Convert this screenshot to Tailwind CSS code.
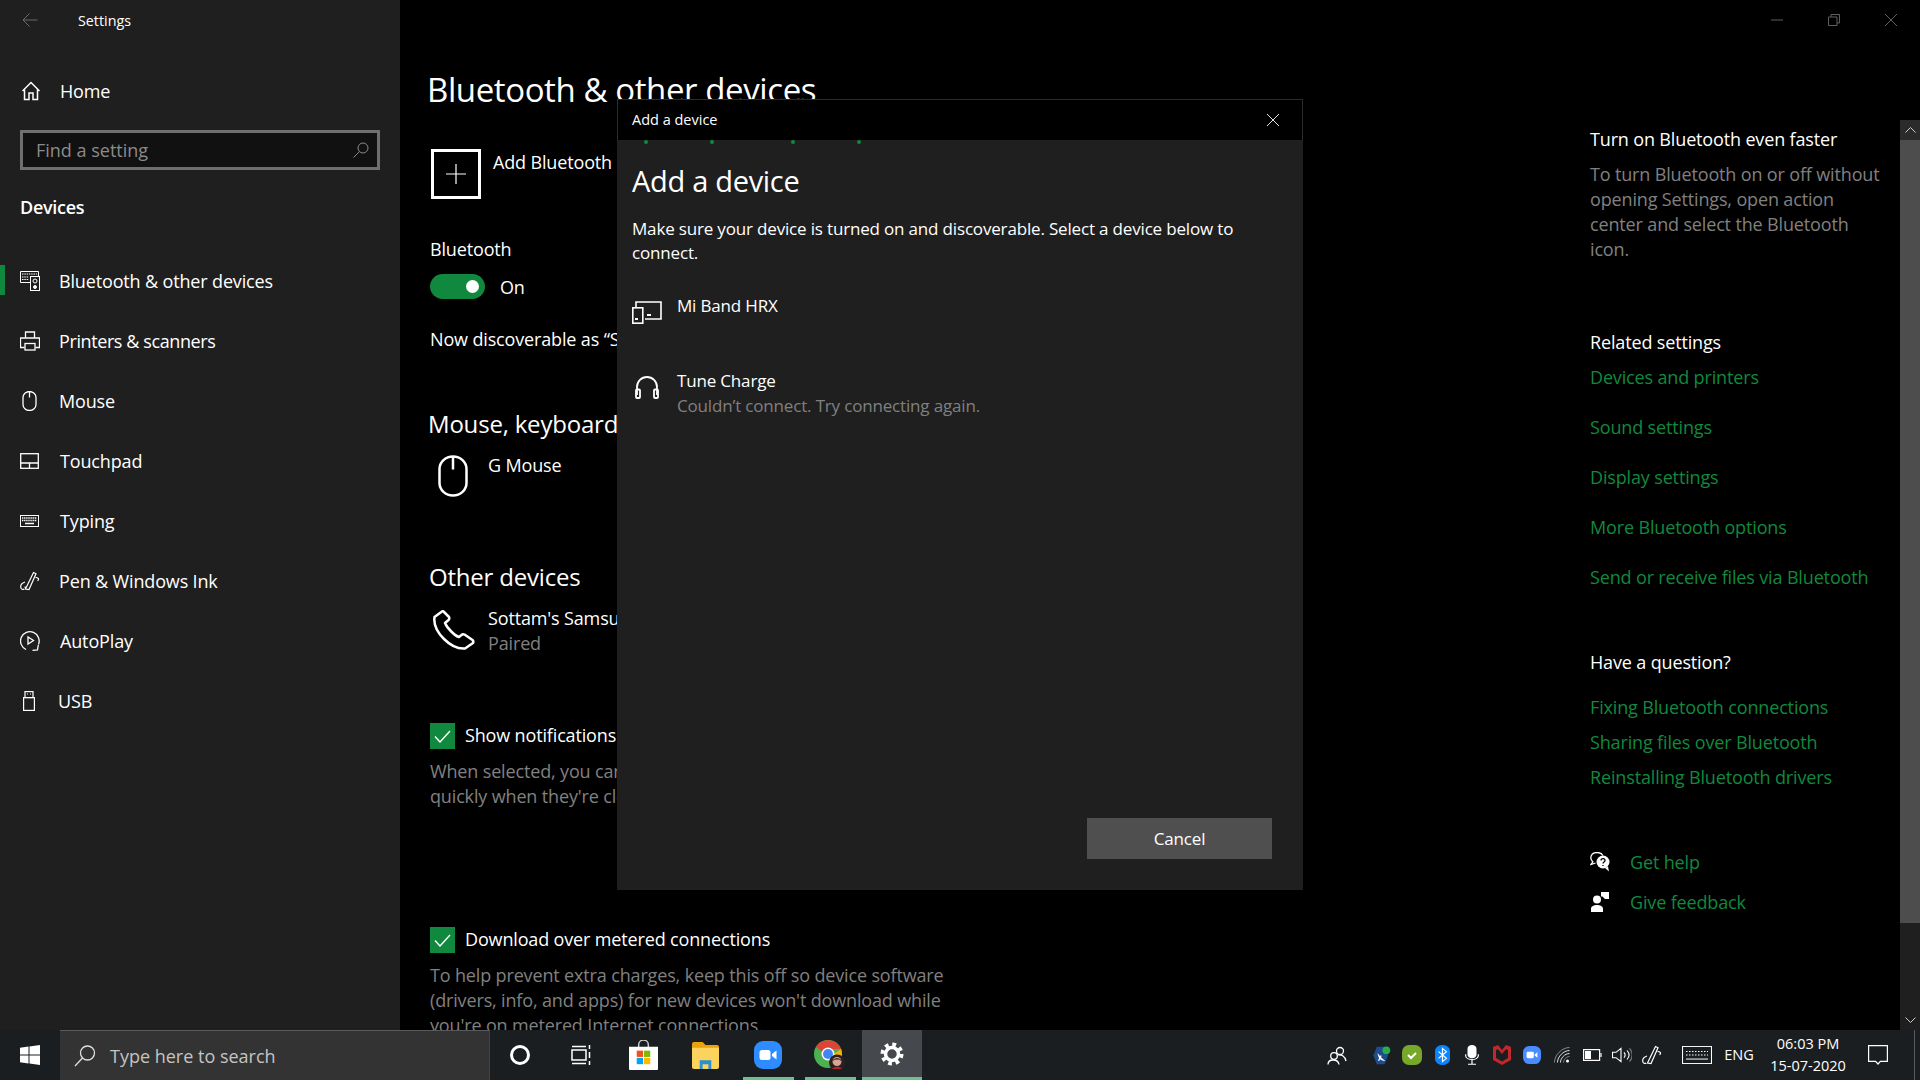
<!DOCTYPE html>
<html lang="en">

<head>
    <meta charset="UTF-8">
    <title>Settings</title>
    <script src="https://cdn.jsdelivr.net/npm/@tailwindcss/browser@4"></script>
</head>

<body class="bg-black text-white overflow-hidden font-['Open_Sans','Noto_Sans',sans-serif] text-[18px] leading-6 tracking-[-0.15px]">
    <div class="w-[1920px] h-[1080px] flex flex-col">
        <!-- Window -->
        <div class="relative h-[1030px] flex overflow-hidden">
            <!-- Sidebar -->
            <aside class="w-[400px] shrink-0 bg-[#1f1f1f]">
                <div class="h-10 flex items-center pl-[22px]">
                    <svg class="w-4 h-4" viewBox="0 0 16 16" fill="none" stroke="#6a6a6a" stroke-width="1"><path d="M15.500 8H1M7.500 1.500 1 8l6.500 6.500" /></svg>
                    <span class="ml-10 mt-[2px] text-[14.300px] tracking-normal">Settings</span>
                </div>
                <div class="mt-[21px] h-[60px] flex items-center pl-[22px]">
                    <svg class="w-[18px] h-[20px]" viewBox="0 0 18 20" fill="none" stroke="white" stroke-width="1.500"><path d="M.5 10 9 1.500l8.500 8.500M2.500 8.500V18.500h4.500v-6.500h4v6.500h4.500V8.500" /></svg>
                    <span class="ml-[20px]">Home</span>
                </div>
                <div class="mt-[9px] mx-5 h-10 border-[3px] border-[#6f6f6f] bg-[#111111] flex items-center justify-between pl-[13px] pr-[8px] text-[#8b8b8b] tracking-normal">
                    <span>Find a setting</span>
                    <svg class="w-4 h-4" viewBox="0 0 16 16" fill="none" stroke="#8b8b8b" stroke-width="1"><circle cx="10" cy="6" r="5" /><path d="M6.500 9.500.5 15.500" /></svg>
                </div>
                <div class="mt-[25px] ml-5 font-semibold tracking-[-0.3px]">Devices</div>
                <nav class="mt-8">
                    <div class="relative h-[60px] flex items-center pl-5">
                        <div class="absolute left-0 top-[14px] w-[5px] h-[30px] bg-[#10893e]"></div>
                        <svg class="w-5 h-5" viewBox="0 0 20 20" fill="none" stroke="white" stroke-width="1"><path d="M11 11.500H.5V.5h18V5" /><path d="M2 3h15M2 6h7M2 8.500h7" stroke-dasharray="1.500 .8" /><rect x="10.500" y="5.500" width="9" height="14" /><circle cx="15" cy="10" r="2" /><circle cx="15" cy="16" r="1.500" fill="white" /></svg>
                        <span class="ml-[19px]">Bluetooth &amp; other devices</span>
                    </div>
                    <div class="h-[60px] flex items-center pl-5">
                        <svg class="w-5 h-5" viewBox="0 0 20 20" fill="none" stroke="white" stroke-width="1.300"><path d="M5.500 7V1h9v6M4.500 16.500H.5V7h19v9.500h-4" /><rect x="5" y="12.500" width="10" height="6.500" /></svg>
                        <span class="ml-[19px] tracking-[-0.4px]">Printers &amp; scanners</span>
                    </div>
                    <div class="h-[60px] flex items-center pl-[22px]">
                        <svg class="w-[15px] h-5" viewBox="0 0 15 20" fill="none" stroke="white" stroke-width="1.300"><path d="M1 6.500a6.500 6 0 0 1 13 0v7a6.500 6 0 0 1-13 0zM7.500 .5v6" /></svg>
                        <span class="ml-[22px]">Mouse</span>
                    </div>
                    <div class="h-[60px] flex items-center pl-5">
                        <svg class="w-[19px] h-4" viewBox="0 0 19 16" fill="none" stroke="white" stroke-width="1.300"><rect x=".7" y=".7" width="17.600" height="14.600" /><path d="M.7 10h17.600M9.500 10v5" /></svg>
                        <span class="ml-[21px]">Touchpad</span>
                    </div>
                    <div class="h-[60px] flex items-center pl-5">
                        <svg class="w-[19px] h-3" viewBox="0 0 19 12" fill="none" stroke="white" stroke-width="1"><rect x=".5" y=".5" width="18" height="11" /><path d="M2 3h15M2 5.500h15" stroke-width="1.600" stroke-dasharray="1.400 .7" /><path d="M5 8.500h9" stroke-width="1.500" /></svg>
                        <span class="ml-[21px]">Typing</span>
                    </div>
                    <div class="h-[60px] flex items-center pl-5">
                        <svg class="w-5 h-5" viewBox="0 0 20 20" fill="none" stroke="white" stroke-width="1.200"><path d="m5.500 18 8-16.500 2.500 1.200L9 18.500ZM5.500 18l-.5-2.500M15.500 6.500c3 0 4 1.800 2 3.200M5 11C2 12 .5 14 .7 16c.2 2.500 2.300 3 3.500 2" /></svg>
                        <span class="ml-[19px]">Pen &amp; Windows Ink</span>
                    </div>
                    <div class="h-[60px] flex items-center pl-5">
                        <svg class="w-5 h-5" viewBox="0 0 20 20" fill="none" stroke="white" stroke-width="1.300"><path d="M6 18.500A9.300 9.300 0 1 1 18.500 13.500" /><path d="M8 6v7l5.500-3.500zM12.500 19.300l5-.3.800-5" /></svg>
                        <span class="ml-5">AutoPlay</span>
                    </div>
                    <div class="h-[60px] flex items-center pl-[23px]">
                        <svg class="w-3 h-5" viewBox="0 0 12 20" fill="none" stroke="white" stroke-width="1.200"><rect x="2" y=".6" width="8" height="6" /><rect x=".6" y="6.600" width="10.800" height="12.800" /><path d="M4 3h1M7 3h1" /></svg>
                        <span class="ml-[23px]">USB</span>
                    </div>
                </nav>
            </aside>

            <!-- Main content -->
            <main class="w-[1190px] shrink-0 pl-[30px] pt-[67px]">
                <h1 class="h-[46px] -ml-[3px] text-[33px] leading-[46px] tracking-[-0.4px]">Bluetooth &amp; other devices</h1>
                <div class="mt-[36px] h-[50px] flex items-start pl-px">
                    <div class="w-[50px] h-[50px] border-[3px] border-white flex items-center justify-center">
                        <svg class="w-5 h-5" viewBox="0 0 20 20" stroke="white" stroke-width="1.200"><path d="M10 0v20M0 10h20" /></svg>
                    </div>
                    <span class="ml-3 mt-px">Add Bluetooth or other device</span>
                </div>
                <div class="mt-[38px]">Bluetooth</div>
                <div class="mt-[13px] h-[25px] flex items-center">
                    <div class="w-[55px] h-[25px] rounded-full bg-[#10893e] flex items-center justify-end pr-[6px]">
                        <div class="w-[13px] h-[13px] rounded-full bg-white"></div>
                    </div>
                    <span class="ml-[15px]">On</span>
                </div>
                <div class="mt-7">Now discoverable as “Sottam-PC”</div>
                <h2 class="mt-[57px] -ml-[2px] h-8 text-[24px] leading-8 tracking-[-0.2px]">Mouse, keyboard, &amp; pen</h2>
                <div class="mt-[13px] h-[46px] flex items-start">
                    <svg class="mt-[2px] ml-2 w-[30px] h-[42px]" viewBox="0 0 30 42" fill="none" stroke="white" stroke-width="2.500"><path d="M1.500 14a13.500 12.500 0 0 1 27 0v14a13.500 12.500 0 0 1-27 0zM15 1.500v13" /></svg>
                    <span class="ml-[20px]">G Mouse</span>
                </div>
                <h2 class="mt-[62px] -ml-px h-8 text-[24px] leading-8 tracking-[-0.2px]">Other devices</h2>
                <div class="mt-[13px] h-[49px] flex items-start">
                    <svg class="mt-[4px] ml-[3px] w-[42px] h-[40px]" viewBox="0 0 42 40" fill="none" stroke="white" stroke-width="2.500" stroke-linejoin="round"><path d="M9 1.500 1.500 7C.5 14 4 22 11 29c7 7 15 10 21 9.500l8-5.500c.5-1 .5-2-.5-3l-8-5.500c-1-.5-2-.5-3 .5L26 27c-4-1-12-9-14-14l3.500-3c1-1 1-2 .5-3L11 2c-.5-1-1.500-1-2-.5z" /></svg>
                    <div class="ml-[13px]">
                        <div class="h-[25px]">Sottam's Samsung</div>
                        <div class="h-6 text-[#808080]">Paired</div>
                    </div>
                </div>
                <div class="mt-[68px] h-[26px] flex items-center">
                    <div class="w-[25px] h-[26px] bg-[#10893e] flex items-center justify-center">
                        <svg class="w-[17px] h-[13px]" viewBox="0 0 17 13" fill="none" stroke="white" stroke-width="1.400"><path d="m1 6.500 5 5.500L16 1" /></svg>
                    </div>
                    <span class="ml-[10px] -mt-[2px]">Show notifications to connect using Swift Pair</span>
                </div>
                <p class="mt-[10px] w-[530px] leading-[25px] text-[#808080]">When selected, you can connect to supported Bluetooth devices quickly when they're close by and in pairing mode.</p>
                <div class="mt-[118px] h-[26px] flex items-center">
                    <div class="w-[25px] h-[26px] bg-[#10893e] flex items-center justify-center">
                        <svg class="w-[17px] h-[13px]" viewBox="0 0 17 13" fill="none" stroke="white" stroke-width="1.400"><path d="m1 6.500 5 5.500L16 1" /></svg>
                    </div>
                    <span class="ml-[10px] -mt-[2px]">Download over metered connections</span>
                </div>
                <p class="mt-[10px] w-[530px] leading-[25px] text-[#808080]">To help prevent extra charges, keep this off so device software (drivers, info, and apps) for new devices won't download while you're on metered Internet connections.</p>
            </main>

            <!-- Related links column -->
            <section class="w-[310px] shrink-0 pt-[127px]">
                <div>Turn on Bluetooth even faster</div>
                <p class="mt-[11px] w-[295px] leading-[25px] text-[#808080]">To turn Bluetooth on or off without opening Settings, open action center and select the Bluetooth icon.</p>
                <div class="mt-[68px]">Related settings</div>
                <div class="mt-[11px] flex flex-col gap-[26px] text-[#10893e]">
                    <span>Devices and printers</span>
                    <span>Sound settings</span>
                    <span>Display settings</span>
                    <span>More Bluetooth options</span>
                    <span>Send or receive files via Bluetooth</span>
                </div>
                <div class="mt-[61px]">Have a question?</div>
                <div class="mt-[21px] flex flex-col gap-[11px] text-[#10893e]">
                    <span>Fixing Bluetooth connections</span>
                    <span>Sharing files over Bluetooth</span>
                    <span>Reinstalling Bluetooth drivers</span>
                </div>
                <div class="mt-[61px] flex items-center text-[#10893e]">
                    <svg class="w-5 h-5" viewBox="0 0 20 20"><path d="M7 .5C3 .5.8 3 .8 5.800c0 1.700.8 3 2 4L1 12.500l4.500-1.500" fill="none" stroke="white" stroke-width="1.300" /><path d="M7 .5c3 0 5 1.200 5.800 3" fill="none" stroke="white" stroke-width="1.300" /><circle cx="13" cy="10" r="6.500" fill="white" /><path d="m15 16 4 3.500-1-5z" fill="white" /><path d="M11 8.500c0-2.500 4-2.500 4 0 0 1.500-2 1.500-2 3M13 13v1" fill="none" stroke="black" stroke-width="1.300" /></svg>
                    <span class="ml-5">Get help</span>
                </div>
                <div class="mt-4 flex items-center text-[#10893e]">
                    <svg class="w-5 h-5" viewBox="0 0 20 20" fill="white"><circle cx="7" cy="7.500" r="4" /><path d="M1 20v-3c0-3 3-4 6-4s6 1 6 4v3zM11 0h8v7h-4l-2.500-2.500H11z" /></svg>
                    <span class="ml-5">Give feedback</span>
                </div>
            </section>

            <!-- Scrollbar -->
            <div class="w-5 shrink-0 flex flex-col pt-[120px]">
                <div class="h-5 bg-[#2b2b2b] flex items-center justify-center">
                    <svg class="w-[11px] h-[6px]" viewBox="0 0 11 6" fill="none" stroke="#cfcfcf" stroke-width="1"><path d="m.5 5.500 5-5 5 5" /></svg>
                </div>
                <div class="h-[783px] bg-[#4d4d4d]"></div>
                <div class="flex-1 bg-[#1f1f1f] flex items-end justify-center pb-[7px]">
                    <svg class="w-[11px] h-[6px]" viewBox="0 0 11 6" fill="none" stroke="#cfcfcf" stroke-width="1"><path d="m.5.5 5 5 5-5" /></svg>
                </div>
            </div>

            <!-- Window controls -->
            <div class="absolute top-0 right-0 h-10 flex items-center">
                <svg class="absolute right-[137px] w-3 h-[2px]" viewBox="0 0 12 2" stroke="#5f5f5f"><path d="M0 1h12" /></svg>
                <svg class="absolute right-[80px] w-3 h-3" viewBox="0 0 12 12" fill="none" stroke="#5f5f5f"><path d="M.5 3h8.500v8.500H.5zM3 3V.5h8.500V9H9" /></svg>
                <svg class="absolute right-[23px] w-3 h-3" viewBox="0 0 12 12" stroke="#5f5f5f"><path d="m0 0 12 12M12 0 0 12" /></svg>
            </div>

            <!-- Add a device dialog -->
            <div class="absolute left-[617px] top-[99px] w-[686px] h-[791px] bg-[#1f1f1f] flex flex-col text-[17px] tracking-[-0.17px]">
                <div class="h-[41px] shrink-0 bg-black border border-[#2b2b2b] border-b-0 flex items-center justify-between pl-[14px] pr-[23px]">
                    <span class="text-[14.500px] tracking-normal">Add a device</span>
                    <svg class="w-3 h-3" viewBox="0 0 12 12" stroke="#e0e0e0"><path d="m0 0 12 12M12 0 0 12" /></svg>
                </div>
                <div class="h-1 pl-[27px] flex">
                    <div class="w-1 h-1 rounded-full bg-[#10893e]"></div>
                    <div class="ml-[62px] w-1 h-1 rounded-full bg-[#10893e]"></div>
                    <div class="ml-[77px] w-1 h-1 rounded-full bg-[#10893e]"></div>
                    <div class="ml-[62px] w-1 h-1 rounded-full bg-[#10893e]"></div>
                </div>
                <h2 class="mt-[17px] ml-[15px] h-10 text-[29px] leading-10 tracking-[-0.3px]">Add a device</h2>
                <p class="mt-[16px] mx-[15px] w-[620px]">Make sure your device is turned on and discoverable. Select a device below to connect.</p>
                <div class="mt-[29px] ml-[15px] h-[75px] flex items-start">
                    <svg class="mt-[7px] w-[30px] h-[23px]" viewBox="0 0 30 23" fill="none" stroke="white" stroke-width="1.600"><path d="M4 6V1h25v17H13" /><rect x=".8" y="6.800" width="10" height="15.400" /><path d="M3 18h3M15 14h4" stroke-width="2" /></svg>
                    <span class="ml-[15px]">Mi Band HRX</span>
                </div>
                <div class="ml-[15px] flex items-start">
                    <svg class="mt-[6px] ml-[3px] w-6 h-6" viewBox="0 0 24 24" fill="none" stroke="white" stroke-width="1.800"><path d="M2 20V12a10 10 0 0 1 20 0v8" /><rect x="1" y="14.500" width="4" height="8.500" rx="1" /><rect x="19" y="14.500" width="4" height="8.500" rx="1" /></svg>
                    <div class="ml-[18px]">
                        <div class="h-[25px]">Tune Charge</div>
                        <div class="text-[#808080]">Couldn’t connect. Try connecting again.</div>
                    </div>
                </div>
                <button class="mt-auto mb-[31px] mr-[31px] self-end w-[185px] h-[41px] bg-[#4f4f4f]">Cancel</button>
            </div>
        </div>

        <!-- Taskbar -->
        <footer class="h-[50px] flex bg-[#1b1e21] text-white">
            <div class="w-[60px] flex items-center justify-center">
                <svg class="w-5 h-5" viewBox="0 0 20 20" fill="white"><path d="M0 2.800 8.500 1.600v7.800H0zM9.500 1.400 20 0v9.400H9.500zM0 10.500h8.500v7.900L0 17.200zM9.500 10.500H20V20L9.500 18.600z" /></svg>
            </div>
            <div class="w-[430px] bg-[#333333] border-t border-[#5a5a5a] border-r-[1px] border-r-[#444444] flex items-center pl-[14px] text-[#c4c4c4] tracking-normal">
                <svg class="w-[22px] h-[22px] shrink-0" viewBox="0 0 22 22" fill="none" stroke="#e0e0e0" stroke-width="1.300"><circle cx="13.500" cy="8" r="7" /><path d="M8.500 13 1 21" /></svg>
                <span class="ml-[14px]">Type here to search</span>
            </div>
            <div class="w-[60px] flex items-center justify-center">
                <div class="w-5 h-5 rounded-full border-[3px] border-white"></div>
            </div>
            <div class="w-[62px] flex items-center justify-center">
                <svg class="w-5 h-[20px]" viewBox="0 0 20 20" fill="none" stroke="white" stroke-width="1.500"><rect x="1" y="5" width="14" height="10" /><path d="M1 1.500h14M1 18.500h14M18.500 0v4M18.500 7v6M18.500 16v4" /></svg>
            </div>
            <div class="w-[62px] flex items-center justify-center">
                <svg class="w-[29px] h-[30px]" viewBox="0 0 30 31"><path d="M10 8V5a5 5 0 0 1 10 0v3" fill="none" stroke="#d0d0d0" stroke-width="1.500" /><path d="M0 7h30v23a1 1 0 0 1-1 1H1a1 1 0 0 1-1-1z" fill="white" /><rect x="8" y="11" width="6.500" height="6.500" fill="#f25022" /><rect x="15.500" y="11" width="6.500" height="6.500" fill="#7fba00" /><rect x="8" y="18.500" width="6.500" height="6.500" fill="#00a4ef" /><rect x="15.500" y="18.500" width="6.500" height="6.500" fill="#ffb900" /></svg>
            </div>
            <div class="w-[63px] flex items-center justify-center">
                <svg class="w-[27px] h-[27px]" viewBox="0 0 28 28"><path d="M0 2a2 2 0 0 1 2-2h9l3 3h12a2 2 0 0 1 2 2v6H0z" fill="#e8a30d" /><path d="M0 6h28v20a2 2 0 0 1-2 2H2a2 2 0 0 1-2-2z" fill="#fcd35c" /><path d="M8 28V19h12v9h-3v-5h-6v5z" fill="#2a8fd4" /></svg>
            </div>
            <div class="w-[62px] flex flex-col items-center">
                <div class="flex-1 flex items-center pt-[3px]">
                    <svg class="w-7 h-7" viewBox="0 0 28 28"><rect width="28" height="28" rx="9" fill="#2d8cff" /><rect x="5.500" y="9" width="11" height="10" rx="2.500" fill="white" /><path d="m18 13 4.500-3.500v9L18 15z" fill="white" /></svg>
                </div>
                <div class="w-[51px] h-[3px] bg-[#6fbf91]"></div>
            </div>
            <div class="w-[62px] flex flex-col items-center">
                <div class="flex-1 flex items-center pt-[3px]">
                    <svg class="w-[32px] h-[31px]" viewBox="0 0 32 31"><circle cx="14" cy="14" r="14" fill="#4caf50" /><path d="M2 7a14 14 0 0 1 25 2H14a5 5 0 0 0-5 3z" fill="#db4437" /><path d="M27 9a14 14 0 0 1-4 16l-6-9z" fill="#f4b400" /><circle cx="14" cy="14" r="6.500" fill="white" /><circle cx="14" cy="14" r="5" fill="#4285f4" /><circle cx="23" cy="22.500" r="8" fill="#2a2021" /><circle cx="23" cy="21.500" r="4.500" fill="#d9a58e" /><path d="M18.500 21.500c0-4.500 9-4.500 9 0l-2-2h-5z" fill="#111" /><path d="M18 29c2-3 8-3 10 0z" fill="#b3262b" /></svg>
                </div>
                <div class="w-[51px] h-[3px] bg-[#6fbf91]"></div>
            </div>
            <div class="w-[60px] flex flex-col items-center bg-[#45484c] ml-px">
                <div class="flex-1 flex items-center">
                    <svg class="w-6 h-6" viewBox="0 0 24 24" fill="none" stroke="white"><circle cx="12" cy="12" r="6.500" stroke-width="3.500" /><circle cx="12" cy="12" r="9.500" stroke-width="4" stroke-dasharray="3.730 3.730" /></svg>
                </div>
                <div class="w-full h-[3px] bg-[#6fbf91]"></div>
            </div>

            <!-- System tray -->
            <div class="ml-auto flex items-center">
                <div class="w-[30px] flex justify-center mr-[15px]">
                    <svg class="w-[20px] h-[19px]" viewBox="0 0 20 19" fill="none" stroke="white" stroke-width="1.300"><circle cx="13" cy="5" r="3.500" /><circle cx="7" cy="10" r="3.300" /><path d="M1 18.500c0-6 10-6 11 0M11 9c3-1 7 1 8 6" /></svg>
                </div>
                <div class="w-[30px] flex justify-center">
                    <svg class="w-5 h-[19px]" viewBox="0 0 22 22"><path d="M5 1h9l4 10-4 10H5L1 11z" fill="#1d4d8f" /><path d="M6 8c3 4 5 7 9 9-4 1-9-3-9-9z" fill="white" /><path d="M7 17l3-6" stroke="white" stroke-width="1.500" /><circle cx="16" cy="5" r="4.500" fill="#24b14c" /></svg>
                </div>
                <div class="w-[30px] flex justify-center">
                    <svg class="w-5 h-5" viewBox="0 0 20 20"><rect width="20" height="20" rx="7" fill="#78a82a" /><path d="m6 10 3 3 5-5" fill="none" stroke="white" stroke-width="2" /></svg>
                </div>
                <div class="w-[30px] flex justify-center">
                    <svg class="w-[15px] h-5" viewBox="0 0 15 24" preserveAspectRatio="none"><rect width="15" height="24" rx="7" fill="#0a84ff" /><path d="m3.500 8 8 8-4 4V4l4 4-8 8" fill="none" stroke="white" stroke-width="1.200" /></svg>
                </div>
                <div class="w-[30px] flex justify-center">
                    <svg class="w-[14px] h-5" viewBox="0 0 14 24" preserveAspectRatio="none"><rect x="2.500" width="9" height="16" rx="4.500" fill="white" /><path d="M.7 11v2c0 6 12.600 6 12.600 0v-2M7 18v5M3 23h8" fill="none" stroke="white" stroke-width="1.200" /></svg>
                </div>
                <div class="w-[30px] flex justify-center">
                    <svg class="w-[18px] h-[20px]" viewBox="0 0 18 20" fill="#c3272b"><path d="M0 2 5 0l4 5 4-5 5 2v13l-9 5-9-5zm3 3v8l6 3.500 6-3.500V5l-2-.7L9 9 5 4.300z" /></svg>
                </div>
                <div class="w-[30px] flex justify-center">
                    <svg class="w-[18px] h-[18px]" viewBox="0 0 20 20"><rect width="20" height="20" rx="7" fill="#4a8cff" /><rect x="4" y="6.500" width="8" height="7" rx="1.500" fill="white" /><path d="m13 9.500 3-2.500v6l-3-2.500z" fill="white" /></svg>
                </div>
                <div class="w-[30px] flex justify-center">
                    <svg class="w-4 h-4" viewBox="0 0 16 16" fill="none" stroke="#e0e0e0" stroke-width="1"><path d="M.5 15.500C.5 8 8 .5 15.500.5" stroke="#888" /><path d="M3.500 15.500c0-6 6-12 12-12" /><path d="M6.500 15.500c0-4 4-9 9-9" /><path d="M9.500 15.500c0-3 3-6 6-6" stroke="#888" /><circle cx="13.500" cy="14" r="1.500" fill="white" stroke="none" /></svg>
                </div>
                <div class="w-[30px] flex justify-center">
                    <svg class="w-[19px] h-[12px]" viewBox="0 0 19 12" fill="none" stroke="white" stroke-width="1.200"><rect x=".6" y=".6" width="16" height="10.800" /><rect x="2" y="2" width="6" height="8" fill="white" stroke="none" /><path d="M18 4v4" /></svg>
                </div>
                <div class="w-[30px] flex justify-center">
                    <svg class="w-5 h-4" viewBox="0 0 20 18" preserveAspectRatio="none" fill="none" stroke="white" stroke-width="1.100"><path d="M.5 6v6h3.500l5 4.500V1.500L4 6zM12 6c1.500 2 1.500 4 0 6M15 4c2.500 3 2.500 7 0 10" /><path d="M17.500 1.500c3.500 4.500 3.500 10.500 0 15" stroke="#777" /></svg>
                </div>
                <div class="w-[30px] flex justify-center">
                    <svg class="w-5 h-5" viewBox="0 0 20 20" fill="none" stroke="white" stroke-width="1.200"><path d="m5.500 18 8-16.500 2.500 1.200L9 18.500ZM15.500 6.500c3 0 4 1.800 2 3.200M5 11C2 12 .5 14 .7 16c.2 2.500 2.300 3 3.500 2" /></svg>
                </div>
                <div class="ml-[5px] w-[50px] flex justify-center">
                    <svg class="w-[30px] h-[18px]" viewBox="0 0 30 20" preserveAspectRatio="none" fill="none" stroke="white" stroke-width="1.100"><rect x=".5" y=".5" width="29" height="19" /><path d="M4 6h22M4 10h22" stroke-dasharray="1.500 1.500" /><path d="M4 14.500h22" /></svg>
                </div>
                <div class="w-[34px] text-center text-[14.500px] tracking-normal">ENG</div>
                <div class="ml-[7px] w-[90px] text-center text-[14.500px] leading-[22px] tracking-normal">
                    <div>06:03 PM</div>
                    <div>15-07-2020</div>
                </div>
                <div class="w-[50px] flex justify-center">
                    <svg class="w-5 h-5" viewBox="0 0 20 20" fill="none" stroke="white" stroke-width="1.200"><path d="M.6.6h18.800v15.800h-7L10 19l-2.400-2.600H.6z" /></svg>
                </div>
                <div class="w-[17px] h-[50px] flex justify-end pr-[5px]"><div class="w-px h-full bg-[#55585c]"></div></div>
            </div>
        </footer>
    </div>
</body>

</html>
